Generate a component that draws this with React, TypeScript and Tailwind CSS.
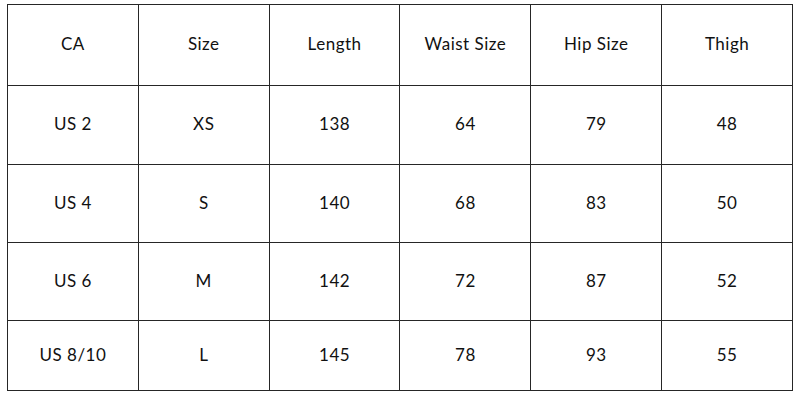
import React from "react";

const header = ["CA", "Size", "Length", "Waist Size", "Hip Size", "Thigh"];
const rows = [
  ["US 2", "XS", "138", "64", "79", "48"],
  ["US 4", "S", "140", "68", "83", "50"],
  ["US 6", "M", "142", "72", "87", "52"],
  ["US 8/10", "L", "145", "78", "93", "55"],
];
const heights = ["h-[79px]", "h-[78px]", "h-[78px]", "h-[70px]"];

export default function App() {
  return (
    <div className="w-[800px] h-[400px] bg-white pt-[4px] pl-[7px]" style={{ fontFamily: "Lato, 'Noto Sans', sans-serif" }}>
      <div className="w-[786px] border-l border-t border-[#262626] text-[17px] text-[#111] tracking-[0.5px]">
        <div className="grid grid-cols-6 h-[81px]">
          {header.map((h, i) => (
            <div key={i} className="border-r border-b border-[#262626] flex items-center justify-center pb-[2px]">
              {h}
            </div>
          ))}
        </div>
        {rows.map((r, ri) => (
          <div key={ri} className={`grid grid-cols-6 ${heights[ri]}`}>
            {r.map((c, ci) => (
              <div key={ci} className="border-r border-b border-[#262626] flex items-center justify-center pb-[2px]">
                {c}
              </div>
            ))}
          </div>
        ))}
      </div>
    </div>
  );
}
